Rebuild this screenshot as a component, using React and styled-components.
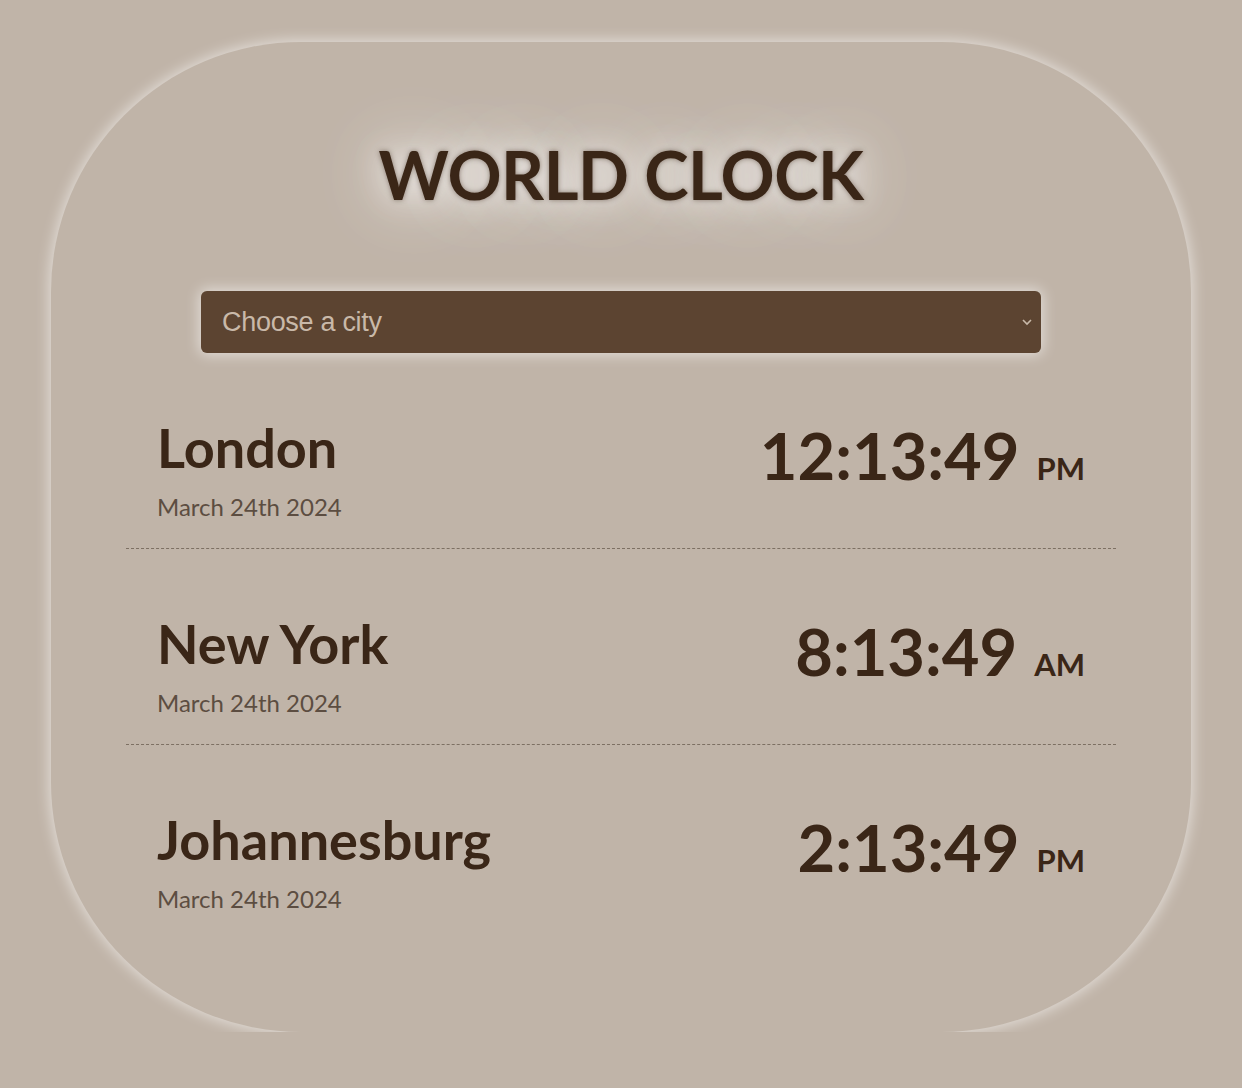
import React from 'react'
import styled, { createGlobalStyle } from 'styled-components'

const GlobalStyle = createGlobalStyle`
    body{
        margin: 0;
        background-color: #c0b4a8;
        font-family: Lato, "Noto Sans", sans-serif;
    }
`

const Card = styled.div`
    box-sizing: border-box;
    width: 1140px;
    min-height: 990px;
    margin: 42px auto 0;
    padding: 92px 75px 60px;
    background-color: #c0b4a8;
    border-radius: 250px;
    box-shadow: 0 0 14px 2px rgba(255, 255, 255, 0.55);
    display: flex;
    flex-direction: column;
    align-items: center;
`

const Title = styled.h1`
    margin: 0;
    font-size: 67px;
    line-height: 1.2;
    font-weight: 700;
    letter-spacing: -0.5px;
    color: #3a2617;
    text-shadow: 0 0 5px rgba(60, 40, 25, 0.5), 0 0 30px rgba(255, 255, 255, 0.7), 0 0 60px rgba(255, 255, 255, 0.9), 0 0 90px rgba(255, 255, 255, 0.5);
`

const SelectWrap = styled.div`
    position: relative;
    width: 840px;
    margin-top: 77px;
    border-radius: 6px;
    box-shadow: 0 0 14px 2px rgba(255, 255, 255, 0.55);
`

const CitySelect = styled.select`
    width: 100%;
    height: 62px;
    padding: 0 21px;
    border: none;
    border-radius: 6px;
    appearance: none;
    background-color: #5c4431;
    color: #c9b9a9;
    font-family: "Liberation Sans", Arial, sans-serif;
    font-size: 27px;
    letter-spacing: -0.3px;
    outline: none;
`

const Chevron = styled.svg`
    position: absolute;
    right: 8px;
    top: 26px;
    pointer-events: none;
`

const List = styled.div`
    width: 990px;
    margin-top: 33px;
`

const Row = styled.div`
    display: flex;
    justify-content: space-between;
    align-items: flex-start;
    padding: 30px 31px 27px 31px;
    border-bottom: ${props => props.last ? 'none' : '1px dashed #7d7063'};
    & + &{
        padding-top: 63px;
    }
`

const CityName = styled.h2`
    margin: 0;
    font-size: 54px;
    line-height: 1.2;
    font-weight: 700;
    color: #3a2617;
`

const CityDate = styled.div`
    margin-top: 11px;
    font-size: 24px;
    color: #5c4d41;
`

const Time = styled.div`
    display: flex;
    align-items: baseline;
    gap: 17px;
    margin-top: 7px;
    font-size: 65px;
    line-height: 1;
    font-weight: 700;
    color: #3a2617;
    small{
        font-size: 31px;
        font-weight: 700;
    }
`

const cities = [
    { name: 'London', time: '12:13:49', period: 'PM' },
    { name: 'New York', time: '8:13:49', period: 'AM' },
    { name: 'Johannesburg', time: '2:13:49', period: 'PM' },
]

function App() {
  return (
    <>
      <GlobalStyle />
      <Card>
        <Title>WORLD CLOCK</Title>
        <SelectWrap>
          <CitySelect defaultValue="">
            <option value="">Choose a city</option>
            <option value="tokyo">Tokyo</option>
            <option value="paris">Paris</option>
          </CitySelect>
          <Chevron width="12" height="10" viewBox="0 0 12 10">
            <path d="M2 3 L6 7 L10 3" fill="none" stroke="#c9b9a9" strokeWidth="1.6" />
          </Chevron>
        </SelectWrap>
        <List>
          {cities.map((city, i) => (
            <Row key={city.name} last={i === cities.length - 1}>
              <div>
                <CityName>{city.name}</CityName>
                <CityDate>March 24th 2024</CityDate>
              </div>
              <Time>
                {city.time}
                <small>{city.period}</small>
              </Time>
            </Row>
          ))}
        </List>
      </Card>
    </>
  )
}

export default App
